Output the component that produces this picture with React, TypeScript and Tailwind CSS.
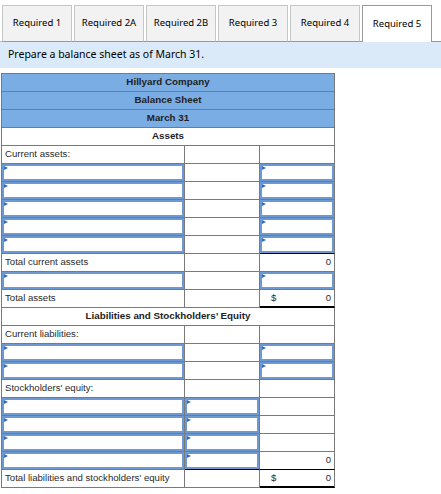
import React from 'react';

type Cell =
    | { kind: 'text'; text?: string; dollar?: boolean; value?: string; line?: 'single' | 'double' }
    | { kind: 'input'; line?: 'single' };

type Row =
    | { kind: 'title'; text: string; blue?: boolean }
    | { kind: 'cells'; cells: [Cell, Cell, Cell] };

const empty: Cell = { kind: 'text' };
const input: Cell = { kind: 'input' };

const rows: Row[] = [
    { kind: 'title', text: 'Hillyard Company', blue: true },
    { kind: 'title', text: 'Balance Sheet', blue: true },
    { kind: 'title', text: 'March 31', blue: true },
    { kind: 'title', text: 'Assets' },
    { kind: 'cells', cells: [{ kind: 'text', text: 'Current assets:' }, empty, empty] },
    { kind: 'cells', cells: [input, empty, input] },
    { kind: 'cells', cells: [input, empty, input] },
    { kind: 'cells', cells: [input, empty, input] },
    { kind: 'cells', cells: [input, empty, input] },
    { kind: 'cells', cells: [input, empty, { kind: 'input', line: 'single' }] },
    { kind: 'cells', cells: [{ kind: 'text', text: 'Total current assets' }, empty, { kind: 'text', value: '0' }] },
    { kind: 'cells', cells: [input, empty, input] },
    {
        kind: 'cells',
        cells: [{ kind: 'text', text: 'Total assets' }, empty, { kind: 'text', dollar: true, value: '0', line: 'double' }],
    },
    { kind: 'title', text: 'Liabilities and Stockholders\u2019 Equity' },
    { kind: 'cells', cells: [{ kind: 'text', text: 'Current liabilities:' }, empty, empty] },
    { kind: 'cells', cells: [input, empty, input] },
    { kind: 'cells', cells: [input, empty, input] },
    { kind: 'cells', cells: [{ kind: 'text', text: "Stockholders' equity:" }, empty, empty] },
    { kind: 'cells', cells: [input, input, empty] },
    { kind: 'cells', cells: [input, input, empty] },
    { kind: 'cells', cells: [input, input, empty] },
    { kind: 'cells', cells: [input, { kind: 'input', line: 'single' }, { kind: 'text', value: '0', line: 'single' }] },
    {
        kind: 'cells',
        cells: [
            { kind: 'text', text: "Total liabilities and stockholders' equity" },
            empty,
            { kind: 'text', dollar: true, value: '0', line: 'double' },
        ],
    },
];

const tabs = ['Required 1', 'Required 2A', 'Required 2B', 'Required 3', 'Required 4', 'Required 5'];

function InputBox() {
    return (
        <div className="relative h-full w-full border-2 border-[#6c99d3] bg-white">
            <span className="absolute left-0 top-0 h-0 w-0 border-y-[2.5px] border-l-[4px] border-y-transparent border-l-[#2f6cbd]" />
        </div>
    );
}

function TableCell({ cell, width }: { cell: Cell; width: string }) {
    let bottom = 'border-b border-b-[#7a7a7a]';
    if (cell.line === 'single') bottom = 'border-b border-b-black';
    if (cell.line === 'double') bottom = 'border-b-2 border-b-black';

    return (
        <div className={`${width} ${bottom} h-full border-r border-r-[#7a7a7a]`}>
            {cell.kind === 'input' ? (
                <InputBox />
            ) : (
                <div className="flex h-full items-center pl-[3px] pr-[3px] text-[9.6px] text-[#2a2a2a]">
                    {cell.text && <span className="whitespace-nowrap">{cell.text}</span>}
                    {cell.dollar && <span className="pl-[8px]">$</span>}
                    {cell.value && <span className="ml-auto">{cell.value}</span>}
                </div>
            )}
        </div>
    );
}

export default function App() {
    return (
        <div className="h-[494px] w-[441px] bg-white" style={{ fontFamily: '"Noto Sans", sans-serif' }}>
            {/* tabs */}
            <div className="flex items-end pt-[5px]">
                <div className="h-[37px] w-[2px] border-b border-[#c6c6c6]" />
                {tabs.map((tab, i) => {
                    const active = i === tabs.length - 1;
                    return (
                        <React.Fragment key={tab}>
                            <div
                                className={
                                    active
                                        ? 'flex h-[37px] w-[70px] items-center justify-center border border-b-0 border-[#9a9a9a] bg-white text-[9.5px] text-black'
                                        : 'flex h-[37px] w-[70px] items-center justify-center border border-[#c6c6c6] border-b-[#9a9a9a] bg-[#f2f2f2] text-[9.5px] text-black'
                                }
                            >
                                {tab}
                            </div>
                            {!active && <div className="h-[37px] w-[2px] border-b border-[#9a9a9a]" />}
                        </React.Fragment>
                    );
                })}
                <div className="h-[37px] flex-1 border-b border-[#9a9a9a]" />
            </div>

            {/* instructions */}
            <div className="flex h-[26px] items-center bg-[#daeaf8] px-[8px] text-[10.5px] text-black">
                Prepare a balance sheet as of March 31.
            </div>

            {/* balance sheet */}
            <div
                className="ml-[1px] mt-[5px] w-[334px] border-l border-t border-[#7a7a7a]"
                style={{ fontFamily: '"Liberation Sans", Arial, sans-serif' }}
            >
                {rows.map((row, i) =>
                    row.kind === 'title' ? (
                        <div
                            key={i}
                            className={`flex h-[18px] items-center justify-center border-b border-r border-[#7a7a7a] text-[9.8px] font-bold text-[#222] ${
                                row.blue ? 'bg-[#7aade3]' : 'bg-white'
                            }`}
                        >
                            {row.text}
                        </div>
                    ) : (
                        <div key={i} className="flex h-[18px]">
                            <TableCell cell={row.cells[0]} width="w-[183px]" />
                            <TableCell cell={row.cells[1]} width="w-[75px]" />
                            <TableCell cell={row.cells[2]} width="w-[75px]" />
                        </div>
                    ),
                )}
            </div>
        </div>
    );
}
